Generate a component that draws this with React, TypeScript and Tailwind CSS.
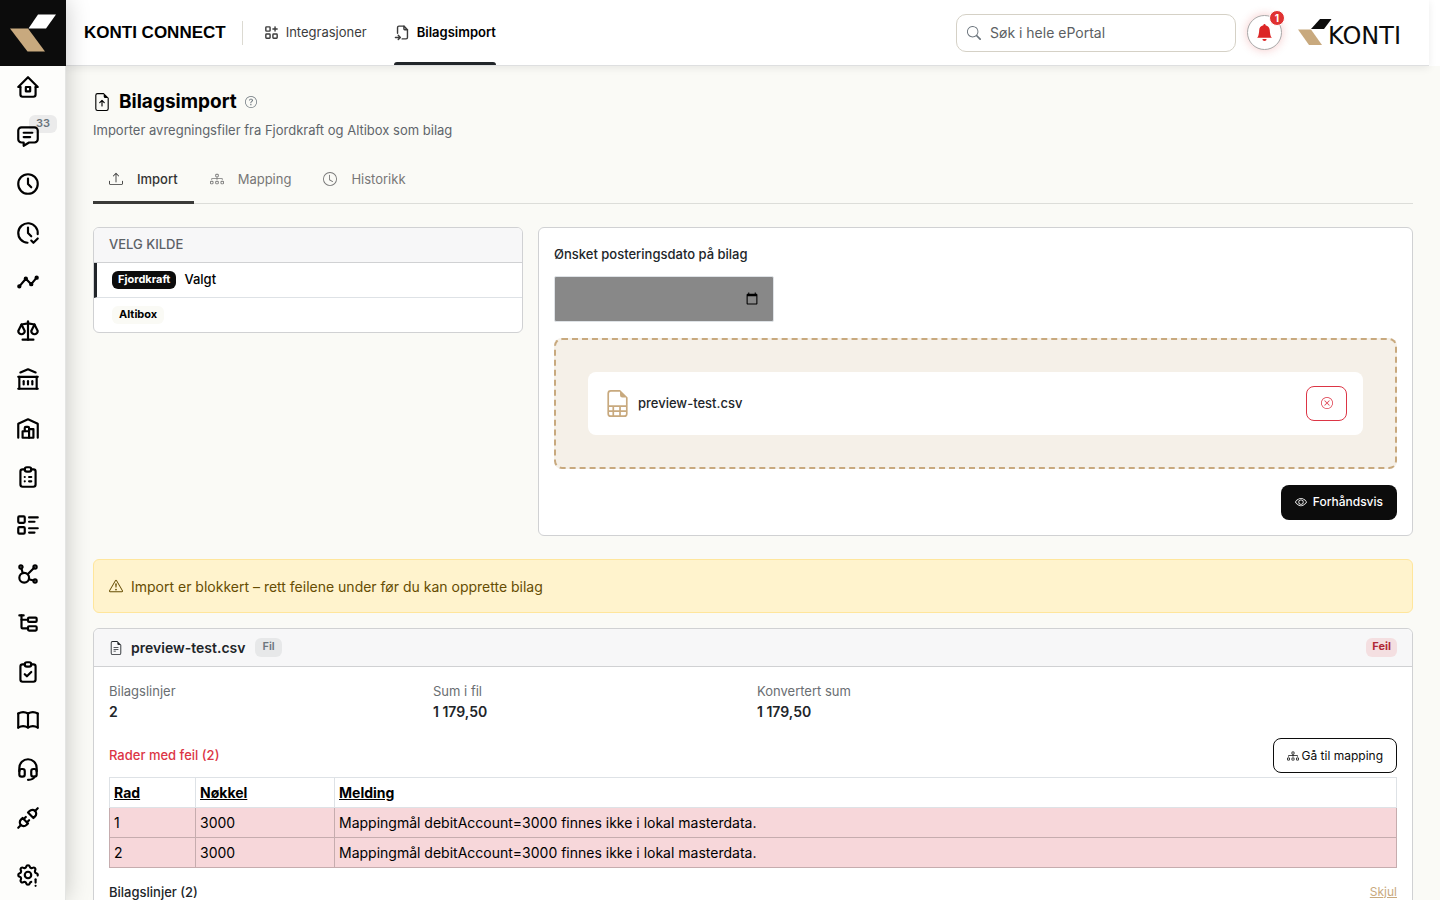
import type { ReactNode } from "react";
import type { IconType } from "react-icons";
import {
	BsBellFill,
	BsClock,
	BsDiagram3,
	BsExclamationTriangle,
	BsEye,
	BsFileEarmarkArrowUp,
	BsFileEarmarkSpreadsheet,
	BsFileEarmarkText,
	BsQuestionCircle,
	BsSearch,
	BsUpload,
	BsXCircle,
} from "react-icons/bs";
import {
	TbAffiliate,
	TbApps,
	TbBook,
	TbBuildingBank,
	TbBuildingWarehouse,
	TbClipboardCheck,
	TbClipboardList,
	TbClock,
	TbClockCheck,
	TbFileImport,
	TbHeadset,
	TbHome2,
	TbListDetails,
	TbMessage,
	TbPlugConnected,
	TbScale,
	TbSettingsExclamation,
	TbSubtask,
	TbTimeline,
} from "react-icons/tb";

interface SidebarItem {
	id: string;
	icon: IconType;
	count?: number;
}

const sidebarItems: SidebarItem[] = [
	{ id: "home", icon: TbHome2 },
	{ id: "messages", icon: TbMessage, count: 33 },
	{ id: "time", icon: TbClock },
	{ id: "approval", icon: TbClockCheck },
	{ id: "timeline", icon: TbTimeline },
	{ id: "scale", icon: TbScale },
	{ id: "bank", icon: TbBuildingBank },
	{ id: "warehouse", icon: TbBuildingWarehouse },
	{ id: "orders", icon: TbClipboardList },
	{ id: "details", icon: TbListDetails },
	{ id: "relations", icon: TbAffiliate },
	{ id: "subtasks", icon: TbSubtask },
	{ id: "checklist", icon: TbClipboardCheck },
	{ id: "book", icon: TbBook },
	{ id: "support", icon: TbHeadset },
	{ id: "connect", icon: TbPlugConnected },
];

const errorRows = [
	{ row: 1, key: "3000", message: "Mappingmål debitAccount=3000 finnes ikke i lokal masterdata." },
	{ row: 2, key: "3000", message: "Mappingmål debitAccount=3000 finnes ikke i lokal masterdata." },
];

const stats = [
	{ label: "Bilagslinjer", value: "2" },
	{ label: "Sum i fil", value: "1\u00a0179,50" },
	{ label: "Konvertert sum", value: "1\u00a0179,50" },
];

function Sidebar() {
	return (
		<aside className="relative z-20 flex w-[66px] shrink-0 flex-col border-r border-[#e4e5e3] bg-[#fdfdfb] shadow-[0_0_24px_rgba(0,0,0,0.22)]">
			<a href="#hjem" aria-label="Konti" className="-mr-px block h-[66px] shrink-0 bg-[#0c0c0c]">
				<svg viewBox="0 0 66 66" className="size-full" aria-hidden="true">
					<path d="M38 14.500H56L46 28.500H28.500Z" fill="#fff" />
					<path d="M10 28.500H28L45 51.500H27.500Z" fill="#c8a97e" />
				</svg>
			</a>
			<nav className="flex flex-1 flex-col justify-between pt-2">
				{sidebarItems.map(({ id, icon: Icon, count }) => (
					<a key={id} href={`#${id}`} aria-label={id} className="relative block px-[15px] text-black">
						{count && (
							<span className="absolute -top-2 left-[29px] rounded-md bg-[#ebebeb] px-[7px] pb-px text-[11px] leading-[17px] font-semibold text-[#6c757d]">
								{count}
							</span>
						)}
						<Icon size={26} className="relative" />
					</a>
				))}
			</nav>
			<a href="#innstillinger" aria-label="settings" className="block px-[15px] pt-[31px] pb-3 text-black">
				<TbSettingsExclamation size={26} />
			</a>
		</aside>
	);
}

function Header() {
	return (
		<header className="relative z-10 mr-[11px] flex h-[66px] shrink-0 items-center border-b border-[#dedfe0] bg-white pr-4 pl-[18px] shadow-[0_2px_8px_rgba(0,0,0,0.08)]">
			<span className="font-['Liberation_Sans',sans-serif] text-[17px] font-bold text-black">KONTI CONNECT</span>
			<span className="mr-5 ml-4 h-6 w-px bg-[#dcdad2]" />
			<nav className="flex gap-[27px] self-stretch text-[13px]">
				<a href="#integrasjoner" className="flex items-center gap-[6px] text-[#3c3c3c]">
					<TbApps size={17} />
					Integrasjoner
				</a>
				<a
					href="#bilagsimport"
					aria-current="page"
					className="relative flex items-center gap-[6px] font-semibold text-black after:absolute after:inset-x-0 after:bottom-0 after:h-[3px] after:rounded-t-sm after:bg-[#212529]"
				>
					<TbFileImport size={17} className="text-[#3c3c3c]" />
					Bilagsimport
				</a>
			</nav>
			<label className="ml-auto flex h-[38px] w-[280px] items-center gap-[9px] rounded-[10px] border border-[#d5d1c6] bg-white px-[10px]">
				<BsSearch size={14} className="text-[#6c757d]" />
				<input
					type="search"
					aria-label="Søk i hele ePortal"
					placeholder="Søk i hele ePortal"
					className="min-w-0 flex-1 bg-transparent text-[14px] outline-none placeholder:text-[#5c5f63]"
				/>
			</label>
			<button
				type="button"
				aria-label="Varsler"
				className="relative ml-[11px] flex size-[35px] items-center justify-center rounded-full border border-[#a9a9a9] bg-white text-[#dc2626] shadow-[0_0_10px_rgba(220,38,38,0.25)]"
			>
				<BsBellFill size={17} />
				<span className="absolute -top-[6px] -right-[4px] flex h-4 items-center rounded-full border border-white bg-[#e03131] px-[5px] text-[10px] font-bold text-white">
					1
				</span>
			</button>
			<a href="#konti" aria-label="KONTI" className="ml-4 flex h-[30px] w-[115px] items-end text-[#0c0c0c]">
				<svg width="34" height="30" viewBox="0 0 34 30" className="-mr-1 shrink-0" aria-hidden="true">
					<path d="M22 1H33.500L26 11H13Z" fill="currentColor" />
					<path d="M0 11.500H13L24 27H11Z" fill="#c8a97e" />
				</svg>
				<span className="font-['DejaVu_Sans',sans-serif] text-2xl leading-6">KONTI</span>
			</a>
		</header>
	);
}

function Tab({ icon: Icon, active, children }: { icon: IconType; active?: boolean; children: ReactNode }) {
	return (
		<button
			type="button"
			role="tab"
			aria-selected={Boolean(active)}
			className={
				active
					? "-mb-px flex items-center gap-[14px] border-b-3 border-[#3a3a38] px-4 pb-3 font-medium text-[#333]"
					: "-mb-px flex items-center gap-[14px] border-b-3 border-transparent px-4 pb-3 text-[#777]"
			}
		>
			<Icon size={14} />
			{children}
		</button>
	);
}

function SourcePicker() {
	return (
		<section className="overflow-hidden rounded-md border border-[#d0d1d3] bg-white text-[13px]">
			<h2 className="border-b border-[#d0d1d3] bg-[#f7f7f8] px-[15px] pt-[6px] pb-2 leading-5 font-medium text-[#5c6166]">
				VELG KILDE
			</h2>
			<button
				type="button"
				className="flex h-[35px] w-full items-center gap-2 border-b border-l-3 border-b-[#dee2e6] border-l-[#212529] px-[15px] pb-px font-medium text-black"
			>
				<span className="rounded-md bg-[#0c0c0c] px-[6px] pb-px text-[11px] leading-[17px] font-bold text-white">Fjordkraft</span>
				Valgt
			</button>
			<button type="button" className="flex h-[34px] w-full items-center px-[18px] pb-px text-black">
				<span className="rounded-md bg-[#fafaf5] px-[7px] pb-px text-[11px] leading-[17px] font-bold">Altibox</span>
			</button>
		</section>
	);
}

function UploadPanel() {
	return (
		<section className="col-span-2 flex flex-col rounded-md border border-[#d0d1d3] bg-white p-[15px]">
			<label htmlFor="posting-date" className="mt-px mb-3 text-[13px] leading-5 font-medium text-[#212529]">
				Ønsket posteringsdato på bilag
			</label>
			<input
				id="posting-date"
				type="date"
				className="h-[46px] w-[220px] rounded-xs border border-[#dee2e6] bg-[#888] pr-3 pl-[14px] text-[14px] text-transparent"
			/>
			<div className="mt-4 rounded-lg border-2 border-dashed border-[#c8a97e] bg-[#f5f0e8] p-8">
				<div className="flex h-[63px] items-center rounded-lg bg-white px-4">
					<BsFileEarmarkSpreadsheet size={27} className="text-[#c8a97e]" />
					<span className="ml-[7px] text-[13px] font-medium text-[#212529]">preview-test.csv</span>
					<button
						type="button"
						aria-label="Fjern fil"
						className="ml-auto flex h-[35px] w-[41px] items-center justify-center rounded-lg border border-[#dc3545] pb-[2px] text-[#dc3545]"
					>
						<BsXCircle size={12} />
					</button>
				</div>
			</div>
			<button
				type="button"
				className="mt-4 flex h-[35px] items-center gap-[6px] self-end rounded-lg bg-[#0c0c0c] px-[14px] pb-[2px] text-[12px] font-medium text-white"
			>
				<BsEye size={12} />
				Forhåndsvis
			</button>
		</section>
	);
}

function FileResult() {
	return (
		<section className="mt-[15px] rounded-md border border-[#d0d1d3] bg-white">
			<div className="flex h-[38px] items-center rounded-t-md border-b border-[#d0d1d3] bg-[#f7f7f8] px-[15px]">
				<BsFileEarmarkText size={14} className="text-[#212529]" />
				<h2 className="ml-2 text-[14px] font-semibold text-[#212529]">preview-test.csv</h2>
				<span className="ml-[10px] rounded-md bg-[#e7e8e9] px-[7px] pb-[2px] text-[11px] leading-[17px] font-semibold text-[#6c757d]">Fil</span>
				<span className="ml-auto rounded-md bg-[#f4dfe1] px-[6px] pb-[2px] text-[11px] leading-[17px] font-bold text-[#b02a37]">Feil</span>
			</div>
			<div className="p-[15px]">
				<dl className="grid grid-cols-4 gap-2">
					{stats.map((stat) => (
						<div key={stat.label}>
							<dt className="text-[13px] leading-[18px] text-[#6a6e72]">{stat.label}</dt>
							<dd className="text-[14px] leading-6 font-semibold text-[#212529]">{stat.value}</dd>
						</div>
					))}
				</dl>
				<div className="mt-[14px] flex items-center justify-between">
					<h3 className="text-[13px] font-medium text-[#dc3545]">Rader med feil (2)</h3>
					<button
						type="button"
						className="flex h-[35px] items-center gap-[3px] rounded-lg border border-[#0c0c0c] px-[13px] text-[12px] text-[#0c0c0c]"
					>
						<BsDiagram3 size={12} />
						Gå til mapping
					</button>
				</div>
				<table className="mt-1 w-full border-collapse text-left text-[14px] leading-[23px] text-black">
					<thead>
						<tr className="underline">
							<th className="w-[86px] border border-[#dee2e6] px-1 py-[3px] font-bold">Rad</th>
							<th className="w-[139px] border border-[#dee2e6] px-1 py-[3px] font-bold">Nøkkel</th>
							<th className="border border-[#dee2e6] px-1 py-[3px] font-bold">Melding</th>
						</tr>
					</thead>
					<tbody className="bg-[#f7d7da]">
						{errorRows.map((item) => (
							<tr key={item.row}>
								<td className="border border-[#c6acae] px-1 py-[3px]">{item.row}</td>
								<td className="border border-[#c6acae] px-1 py-[3px]">{item.key}</td>
								<td className="border border-[#c6acae] px-1 py-[3px]">{item.message}</td>
							</tr>
						))}
					</tbody>
				</table>
				<div className="mt-[14px] flex items-center justify-between">
					<h3 className="text-[13px] leading-5 font-medium text-[#212529]">Bilagslinjer (2)</h3>
					<button type="button" className="text-[12px] text-[#c8a97e] underline">
						Skjul
					</button>
				</div>
			</div>
		</section>
	);
}

export default function App() {
	return (
		<div className="flex h-screen overflow-hidden bg-[#fafaf6] font-['Inter',sans-serif]">
			<Sidebar />
			<div className="flex min-w-0 flex-1 flex-col">
				<div className="shrink-0 bg-white">
					<Header />
				</div>
				<main className="min-h-0 flex-1 overflow-hidden px-[27px] pt-[22px]">
					<div className="flex items-center">
						<BsFileEarmarkArrowUp size={18} className="text-black" />
						<h1 className="ml-2 text-[19px] leading-7 font-bold text-black">Bilagsimport</h1>
						<BsQuestionCircle size={12} className="ml-2 text-[#6c757d]" />
					</div>
					<p className="mt-1 text-[13px] leading-5 text-[#5f656b]">
						Importer avregningsfiler fra Fjordkraft og Altibox som bilag
					</p>
					<div role="tablist" className="mt-[29px] flex border-b border-[#dcddd9] text-[13px] leading-5">
						<Tab icon={BsUpload} active>
							Import
						</Tab>
						<Tab icon={BsDiagram3}>Mapping</Tab>
						<Tab icon={BsClock}>Historikk</Tab>
					</div>
					<div className="mt-[23px] grid grid-cols-3 items-start gap-[15px]">
						<SourcePicker />
						<UploadPanel />
					</div>
					<div
						role="alert"
						className="mt-[23px] flex h-[54px] items-center gap-2 rounded-md border border-[#ffe69c] bg-[#fff3cd] px-[15px] text-[14px] text-[#664d03]"
					>
						<BsExclamationTriangle size={14} />
						Import er blokkert – rett feilene under før du kan opprette bilag
					</div>
					<FileResult />
				</main>
			</div>
		</div>
	);
}
